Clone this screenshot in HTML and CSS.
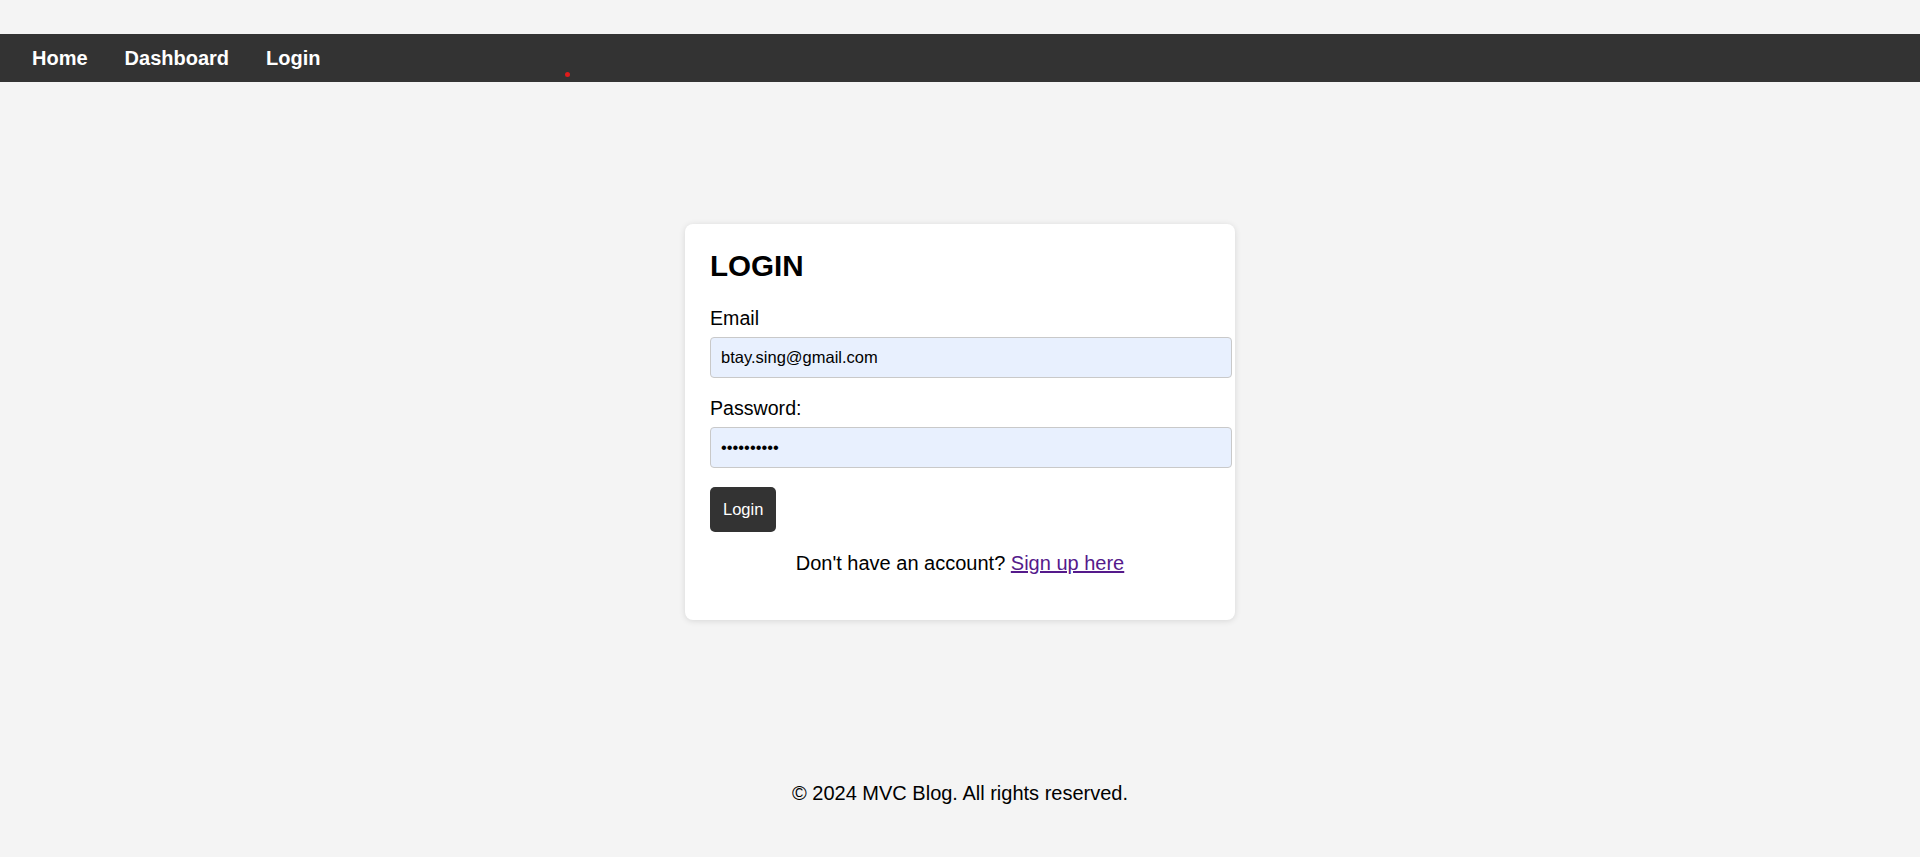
FILE: index.html
```html
<!DOCTYPE html>
<html lang="en">
<head>
<meta charset="utf-8">
<title>MVC Blog - Login</title>
<link rel="stylesheet" href="styles.css">
</head>
<body>
<nav class="navbar">
  <a class="nav-link" href="#">Home</a>
  <a class="nav-link" href="#">Dashboard</a>
  <a class="nav-link" href="#">Login</a>
  <span class="nav-dot"></span>
</nav>
<main class="main">
  <section class="card">
    <h2 class="card-title">LOGIN</h2>
    <form class="login-form">
      <div class="form-group">
        <label class="form-label" for="email">Email</label>
        <input class="form-input" id="email" type="email" value="btay.sing@gmail.com">
      </div>
      <div class="form-group">
        <label class="form-label" for="password">Password:</label>
        <input class="form-input" id="password" type="password" value="abcdefghij">
      </div>
      <button class="btn" type="button">Login</button>
    </form>
    <p class="signup-text">Don't have an account? <a class="signup-link" href="#">Sign up here</a></p>
  </section>
</main>
<footer class="footer">
  <p class="footer-text">© 2024 MVC Blog. All rights reserved.</p>
</footer>
</body>
</html>
```
FILE: styles.css
```css
* {
  box-sizing: content-box;
}

html, body {
  margin: 0;
  padding: 0;
}

body {
  background: #f4f4f4;
  color: #000;
  font-family: "Liberation Sans", Arial, sans-serif;
  min-height: 100vh;
  display: flex;
  flex-direction: column;
  padding-top: 34px;
  box-sizing: border-box;
}

.navbar {
  position: relative;
  height: 48px;
  background: #333;
  display: flex;
  align-items: center;
  gap: 37px;
  padding-left: 32px;
}

.nav-link {
  color: #fff;
  text-decoration: none;
  font-weight: bold;
  font-size: 20px;
}

.nav-dot {
  position: absolute;
  left: 565px;
  top: 38px;
  width: 5px;
  height: 5px;
  border-radius: 50%;
  background: #e01b1b;
}

.main {
  flex: 1;
  display: flex;
  align-items: center;
  justify-content: center;
}

.card {
  width: 500px;
  padding: 25px;
  background: #fff;
  border-radius: 8px;
  box-shadow: 0 1px 6px rgba(0, 0, 0, 0.12);
}

.card-title {
  margin: 0 0 25px;
  font-size: 29.6px;
  line-height: 33px;
  font-weight: bold;
}

.form-group {
  margin-bottom: 19px;
}

.form-label {
  display: block;
  font-size: 19.6px;
  margin-bottom: 7px;
}

.form-input {
  display: block;
  width: 100%;
  padding: 10px;
  border: 1px solid #c9c9c9;
  border-radius: 4px;
  background: #e8f0fe;
  color: #000;
  font-family: "Liberation Sans", Arial, sans-serif;
  font-size: 16.5px;
  margin: 0;
  outline: none;
}

.btn {
  display: block;
  background: #333;
  color: #fff;
  border: none;
  border-radius: 5px;
  padding: 13px;
  font-family: "Liberation Sans", Arial, sans-serif;
  font-size: 16.5px;
  cursor: pointer;
}

.signup-text {
  margin: 20px 0;
  text-align: center;
  font-size: 20px;
}

.signup-link {
  color: #551a8b;
  text-decoration: underline;
}

.footer {
  padding: 20px 0 52px;
  text-align: center;
}

.footer-text {
  margin: 0;
  font-size: 20px;
}
```
